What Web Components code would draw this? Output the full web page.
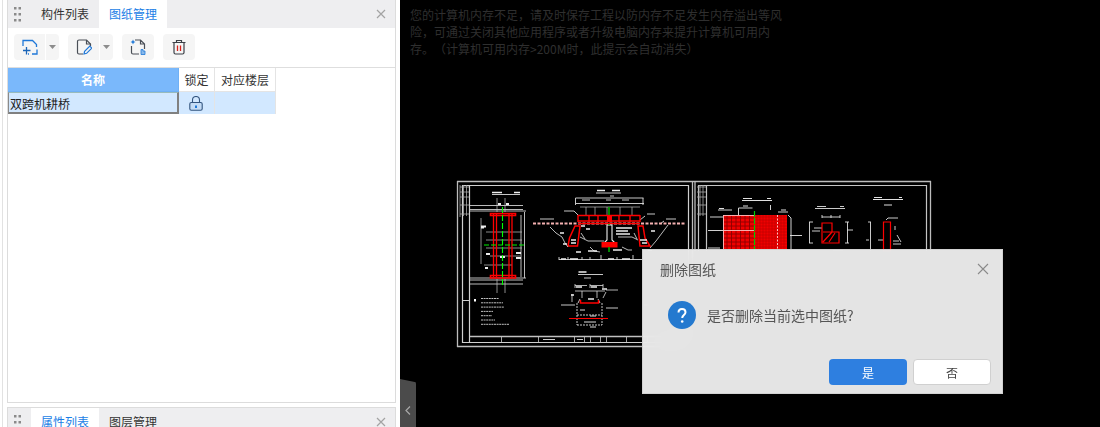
<!DOCTYPE html>
<html lang="zh">
<head>
<meta charset="utf-8">
<title>图纸管理</title>
<style>
    html, body { margin: 0; height: 100%; overflow: hidden; background: #000; }
    body { font: 12px "Noto Sans CJK SC", "Liberation Sans", sans-serif; }
</style>
</head>
<body>
<app-shell>
    <side-column slot="side">
        <dock-panel style="flex: 1" active="1" tabs="构件列表,图纸管理">
            <drawing-toolbar></drawing-toolbar>
            <drawing-table></drawing-table>
        </dock-panel>
        <dock-panel style="height: 20px; flex: none" active="0" tabs="属性列表,图层管理"></dock-panel>
    </side-column>
    <cad-canvas slot="main">
        <confirm-dialog heading="删除图纸" message="是否删除当前选中图纸?"></confirm-dialog>
    </cad-canvas>
</app-shell>

<script>
class AppShell extends HTMLElement {
    constructor() {
        super();
        this.attachShadow({ mode: 'open' });
        this.shadowRoot.innerHTML = `
            <style>
                :host { display: flex; width: 1100px; height: 427px; overflow: hidden; }
                ::slotted(*) { height: 100%; }
            </style>
            <slot name="side"></slot>
            <slot name="main"></slot>
        `;
    }
}

class SideColumn extends HTMLElement {
    constructor() {
        super();
        this.attachShadow({ mode: 'open' });
        this.shadowRoot.innerHTML = `
            <style>
                :host {
                    display: flex;
                    flex-direction: column;
                    gap: 4px;
                    box-sizing: border-box;
                    width: 400px;
                    flex: none;
                    background: #fff;
                    padding-left: 7px;
                    padding-right: 4px;
                    position: relative;
                }
                .edge { position: absolute; left: 2px; top: 0; bottom: 0; width: 1px; background: #e2e2e2; }
            </style>
            <div class="edge"></div>
            <slot></slot>
        `;
    }
}

class DockPanel extends HTMLElement {
    constructor() {
        super();
        this.attachShadow({ mode: 'open' });
        const tabs = this.getAttribute('tabs').split(',');
        const active = Number(this.getAttribute('active'));
        const tabHtml = tabs.map((t, i) => `<div class="tab ${i === active ? 'on' : ''}">${t}</div>`).join('');
        this.shadowRoot.innerHTML = `
            <style>
                :host {
                    display: flex;
                    flex-direction: column;
                    min-height: 0;
                    box-sizing: border-box;
                    border: 1px solid #dcdcdc;
                    background: #fff;
                    overflow: hidden;
                }
                :host([active="0"]) { border-bottom: 0; }
                :host([active="1"]) { border-top: 0; }
                .bar {
                    display: flex;
                    align-items: stretch;
                    height: 28px;
                    flex: none;
                    background: #eeeef0;
                }
                .grip { width: 23px; flex: none; padding: 7px 0 0 6px; box-sizing: border-box; }
                .grip svg { display: block; }
                .tab {
                    width: 68px;
                    display: flex;
                    align-items: center;
                    justify-content: center;
                    color: #333;
                    font-size: 12px;
                    padding-bottom: 1px;
                    box-sizing: border-box;
                }
                .tab.on { background: #fff; color: #1a7ee6; }
                .close { margin-left: auto; width: 29px; display: flex; justify-content: center; padding-top: 9px; box-sizing: border-box; }
            </style>
            <div class="bar">
                <div class="grip"><svg width="7" height="15" fill="#8a8a8a"><rect width="2.500" height="2.500"/><rect x="4.500" width="2.500" height="2.500"/><rect y="6" width="2.500" height="2.500"/><rect x="4.500" y="6" width="2.500" height="2.500"/><rect y="12" width="2.500" height="2.500"/><rect x="4.500" y="12" width="2.500" height="2.500"/></svg></div>
                ${tabHtml}
                <div class="close"><svg width="10" height="10" stroke="#a3a3a3" stroke-width="1.200"><path d="M1 1l8 8M9 1l-8 8"/></svg></div>
            </div>
            <slot></slot>
        `;
    }
}

class DrawingToolbar extends HTMLElement {
    constructor() {
        super();
        this.attachShadow({ mode: 'open' });
        const caret = `<span class="drop"><svg width="7" height="4" fill="#8c8c8c"><path d="M0 0h7L3.500 4z"/></svg></span>`;
        this.shadowRoot.innerHTML = `
            <style>
                :host {
                    display: flex;
                    flex: none;
                    gap: 9px;
                    height: 40px;
                    box-sizing: border-box;
                    padding: 6px 0 0 6px;
                    border-bottom: 1px solid #dedede;
                }
                .btn {
                    display: flex;
                    height: 26px;
                    width: 32px;
                    background: #f5f5f5;
                    border-radius: 4px;
                    align-items: center;
                    justify-content: center;
                }
                .btn.split { width: 45px; justify-content: flex-start; }
                .main { width: 32px; height: 26px; display: flex; align-items: center; justify-content: center; border-right: 1px solid #fff; box-sizing: border-box; }
                .drop { flex: 1; display: flex; align-items: center; justify-content: center; }
                svg { display: block; }
            </style>
            <div class="btn split"><span class="main">
                <svg width="16" height="16" fill="none" stroke="#1f78d8" stroke-width="1.300">
                    <path d="M1 7V1.500h9.500l4 4V8M15 10.500V15h-5M7 15H6"/>
                    <path d="M1 11.500h7.500M4.500 8v7.500" stroke="#1a65b8"/>
                </svg>
            </span>${caret}</div>
            <div class="btn split"><span class="main">
                <svg width="16" height="16" fill="none" stroke="#4a4f57" stroke-width="1.200">
                    <path d="M7 15H3a1.500 1.500 0 0 1-1.500-1.500v-11A1.500 1.500 0 0 1 3 1h7.500l4 4v2"/><path d="M10.500 1v4h4"/>
                    <path d="M8 15l.6-2.700 5.200-5.200 2 2-5.200 5.200z" stroke="#1f78d8"/>
                </svg>
            </span>${caret}</div>
            <div class="btn">
                <svg width="16" height="16" fill="none" stroke="#4a4f57" stroke-width="1.200">
                    <path d="M1.500 7v6.500A1.500 1.500 0 0 0 3 15h6M5 1h5.500l4 4v5M10.500 1v4h4"/>
                    <path d="M3 .5l.8 1.700 1.700.8-1.700.8L3 5.500l-.8-1.700L.5 3l1.700-.8z" fill="#1f78d8" stroke="none"/>
                    <path d="M11 10.500h2v1.500h2v3.500h-4z" fill="#8ab9ea" stroke="#1f78d8" stroke-width=".8"/>
                </svg>
            </div>
            <div class="btn">
                <svg width="14" height="16" fill="none" stroke="#3b3f46" stroke-width="1.200">
                    <path d="M.5 3.500h13M4.500 3.500V1.500h5v2M2 3.500v10A1.500 1.500 0 0 0 3.500 15h7a1.500 1.500 0 0 0 1.500-1.500v-10"/>
                    <path d="M5.500 6.500v5.500M8.500 6.500v5.500" stroke="#d6231c" stroke-width="1.300"/>
                </svg>
            </div>
        `;
    }
}

class DrawingTable extends HTMLElement {
    constructor() {
        super();
        this.attachShadow({ mode: 'open' });
        this.shadowRoot.innerHTML = `
            <style>
                :host {
                    display: grid;
                    grid-template-columns: 171px 36px 61px;
                    grid-template-rows: 24px 22px;
                    width: 268px;
                    font-size: 12px;
                    color: #333;
                }
                .h {
                    display: flex;
                    align-items: center;
                    justify-content: center;
                    border-right: 1px solid #e4e4e4;
                    border-bottom: 1px solid #e4e4e4;
                    box-sizing: border-box;
                }
                .h.name { background: #7ab8fb; color: #fff; font-weight: 700; border-color: #6fb0f5; }
                .c {
                    background: #d2e8ff;
                    border-right: 1px solid #e4e4e4;
                    box-sizing: border-box;
                    display: flex;
                    align-items: center;
                    justify-content: center;
                    padding-right: 2px;
                }
                .c.name {
                    justify-content: flex-start;
                    padding: 1px 0 0 1px;
                    border-top: 1px solid #9bb;
                    border-left: 1px solid #8a8a8a;
                    border-right: 2px solid #808080;
                    border-bottom: 2px solid #808080;
                    color: #222;
                }
            </style>
            <div class="h name">名称</div>
            <div class="h">锁定</div>
            <div class="h">对应楼层</div>
            <div class="c name">双跨机耕桥</div>
            <div class="c">
                <svg width="14" height="15" fill="none" stroke="#33557f" stroke-width="1.100">
                    <path d="M3.500 6.500V4a3.500 3.500 0 0 1 7 0v2.500"/>
                    <rect x=".8" y="6.500" width="12.400" height="7.800" rx="1.500" fill="#c4dcf6"/>
                    <path d="M7 9.500v2.500" stroke="#1f78d8" stroke-width="2"/>
                </svg>
            </div>
            <div class="c"></div>
        `;
    }
}

class CadCanvas extends HTMLElement {
    constructor() {
        super();
        this.attachShadow({ mode: 'open' });
        this.shadowRoot.innerHTML = `
            <style>
                :host { display: block; flex: 1; min-width: 0; position: relative; background: #000; height: 427px; overflow: hidden; }
                .notice {
                    position: absolute;
                    left: 10px;
                    top: 6px;
                    width: 380px;
                    font-size: 12px;
                    line-height: 17px;
                    color: #2f2f2f;
                    text-spacing-trim: space-all;
                }
                svg.sheet { position: absolute; left: 0; top: 0; }
                .handle {
                    position: absolute;
                    left: 0;
                    top: 379px;
                    width: 16px;
                    height: 48px;
                    background: #4b4b4b;
                    border-top-right-radius: 5px;
                    clip-path: polygon(0 0, 100% 7%, 100% 100%, 0 100%);
                    display: flex;
                    justify-content: center;
                    padding-top: 27px;
                    box-sizing: border-box;
                }
            </style>
            <div class="notice">您的计算机内存不足&#65292;请及时保存工程以防内存不足发生内存溢出等风险&#65292;可通过关闭其他应用程序或者升级电脑内存来提升计算机可用内存&#12290;&#65288;计算机可用内存&gt;200M时&#65292;此提示会自动消失&#65289;</div>
            <svg class="sheet" width="700" height="427" viewBox="400 0 700 427" fill="none" stroke="#d8d8d8" stroke-width="1">${this.sheet()}</svg>
            <div class="handle"><svg width="6" height="9" fill="none" stroke="#a8a8a8" stroke-width="1.200"><path d="M5 .5L1 4.500l4 4"/></svg></div>
            <slot></slot>
        `;
    }

    sheet() {
        // frames
        let frame = `
            <path d="M457.500 181v166M457 181.500h474M457 346.500h236M692.500 181v166M695 181v70M930.500 181v70" stroke="#bdbdbd" stroke-width="1.300"/>
            <path d="M462.500 185.500h226v157h-226zM469.500 185v157M462.500 300.500h7" stroke="#d0d0d0" stroke-width="1.200"/>
            <path d="M460 187h9M460 192h9M460 197h9M460 205h9M460 214h9M463.500 185v31M466.500 185v31M460 185v32" stroke="#aaa" stroke-width=".8"/>
            <path d="M470 336.500h219" stroke="#c0c0c0" stroke-width="1.500"/>
            <path d="M501.500 337v5M538.500 337v5M574.500 337v5M584.500 337v5M590.500 337v5M600.500 337v5M606.500 337v5M626.500 337v5M647.500 337v5M666.500 337v5" stroke="#ccc" stroke-width=".8"/>
            <path d="M543 339.500h12M577 339.500h6" stroke="#ccc"/>
            <path d="M698.500 185.500h228M698.500 185v66M926.500 185v66M706.500 185v66" stroke="#c4c4c4" stroke-width="1.200"/>
            <path d="M697 187h9M697 192h9M697 197h9M697 205h9M697 214h9M700 185v31M703 185v31" stroke="#aaa" stroke-width=".8"/>`;

        // plan view
        let plan = `
            <path d="M492 194.500h28" stroke="#ddd" stroke-width=".9"/>
            <path d="M492 192.500h10M514 192.500h6" stroke="#eee" stroke-width="1.500"/>
            <path d="M470 205.500h53M470 209.500h53M470 211h56M470 278h56M470 280h53M470 284h53M524.500 212v66M521 215v62" stroke="#cfcfcf" stroke-width=".9"/>
            <path d="M497 198v14M505 198v14M497 279v14M505 279v14M486 232h36M486 240h36M486 248h36M490 256h30M484 265h28M481 218v46" stroke="#c4c4c4" stroke-width=".7"/>
            <path d="M481 226.500h5M481 227.500h3M486 254h4M516 253h5M516 258h5M500 257h5M485 268h3M498 204h3M506 204h3" stroke="#eee" stroke-width="2"/>
            <path d="M493.500 214v64M496.500 214v64M509 214v64M512 214v64" stroke="#f00" stroke-width="1.300"/>
            <path d="M490.500 213.500h25v2h-25zM490.500 275.500h25v2.500h-25z" stroke="#f00" stroke-width="1.600"/>
            <path d="M502.500 207v80" stroke="#0f0" stroke-width="1.100" stroke-dasharray="6 2"/>
            <path d="M484 245h41" stroke="#0e0" stroke-width="1.100" stroke-dasharray="5 2"/>`;

        // elevation
        let elev = `
            <path d="M597 190.500h8M612 190.500h8" stroke="#eee" stroke-width="1.500"/>
            <path d="M596 193h25M575.500 198h68M575.500 198v7M643 198v7M576 203.500h68M582 200h8M606 200h5M622 200h7M610 196h4" stroke="#ddd" stroke-width=".9"/>
            <path d="M580 207h60M586 207v8M595 207v8M607 207v8M620 207v8M632 207v8" stroke="#bbb" stroke-width=".7"/>
            <path d="M564 211h10M574 211l5 5M647 214h8M645 216l-5 4M540 219h14M666 219h10M664 221l-4 3" stroke="#ddd" stroke-width=".9"/>
            <path d="M533 223.500h152" stroke="#f4b0b0" stroke-width="1.800" stroke-dasharray="3 1.500"/>
            <path d="M578 215.500h62M578 221h62M578 215v7M640 215v7M589 215v7M598 215v7M609 215v7M619 215v7M630 215v7M578 223.500h62" stroke="#f00" stroke-width="1.400"/>
            <rect x="607" y="215" width="5" height="7" fill="#f00" stroke="none"/>
            <path d="M575 226h5l-2.500 20H568l1.500-8zM638 226h5l2 12 5 8h-10z" stroke="#f00" stroke-width="1.500"/>
            <path d="M571 240h5M640 240h7M571 243h5M642 243h5" stroke="#eee" stroke-width="1.500"/>
            <path d="M607 225h5v15l3 3h-11l3-3z" stroke="#eee" stroke-width="1.100"/>
            <rect x="602" y="242.500" width="15" height="4.500" fill="#f00" stroke="#f00"/>
            <path d="M609 207v8M609 224v1M609 247v5" stroke="#0a0" stroke-width="1.600"/>
            <path d="M550 227l6 6 6 4 3 6 3 4M668 225l-6 8-6 8-6 7M580 237l8 4h16M618 237h14l6 3M590 247l4 4 6 1M622 247l6 3 4 0M581 233l4 6M634 233l3 6" stroke="#cfcfcf" stroke-width=".9"/>
            <path d="M581 226h4M586 229h4M616 228h16M616 231h12M616 234h14M560 233h4M651 231h4" stroke="#eee" stroke-width="1.300"/>
            <path d="M588 251h9M613 250h9M576 252h5M563 244h4M648 250h4" stroke="#eee" stroke-width="1.400"/>
            <path d="M559 259.500h84M559 257v3M568 257v3M582 257v3M590 257v3M601 255v5M617 257v3M633 255v5" stroke="#ddd" stroke-width=".9"/>
            <path d="M561 259h5M570 259h8M608 259h6M622 259h8" stroke="#eee" stroke-width="1.600"/>`;

        // small section
        let section = `
            <path d="M578.500 272h8" stroke="#eee" stroke-width="1.500"/>
            <path d="M578 274.500h25M584 278h7" stroke="#ddd" stroke-width=".9"/>
            <path d="M575 285.500h12M590 285.500h13M575 284v4M590 284v4M603 284v4M575 291h30M582 291v7M597 291v7M572 294v8M603 298l3-6M606 290h12" stroke="#ddd" stroke-width=".8"/>
            <path d="M576 287h6M591 287h6M571 295h3M602 289h5M588 299h6" stroke="#eee" stroke-width="1.300"/>
            <path d="M561 305h14M606 308h12M578 303l2-4M600 303l-2-4M644 305h5" stroke="#ddd" stroke-width=".9"/>
            <path d="M580.500 300v3h18v-3" stroke="#f00" stroke-width="1.500"/>
            <path d="M577 303v22M602 303v22M577 315h25M577 325h25" stroke="#ddd" stroke-width=".9" stroke-dasharray="2 1"/>
            <path d="M569 318.500h39" stroke="#f00" stroke-width="1.200"/>
            <path d="M580 310h5M590 316h6M584 322h12M590 327h6" stroke="#ddd"/>`;

        // notes
        let notes = '<path d="M475 299v2.500" stroke="#fff" stroke-width="2"/>';
        const noteLens = [18, 22, 23, 12, 11, 14, 28];
        noteLens.forEach((len, i) => {
            const y = 298.500 + i * 4.300;
            notes += `<path d="M481 ${y}h${len}" stroke="#c0c0c0" stroke-width="1" stroke-dasharray="2 .6"/>`;
        });

        // right sheet, hatched block and sections
        let grid = '<rect x="723" y="215" width="64" height="34" fill="#f00000" stroke="none"/>';
        for (let x = 727; x < 754; x += 4.500) grid += `<path d="M${x} 215v34" stroke="#8a0000" stroke-width=".9"/>`;
        for (let y = 218; y < 249; y += 4) grid += `<path d="M724 ${y}h30" stroke="#8a0000" stroke-width=".9"/>`;
        for (let x = 757; x < 787; x += 3) grid += `<path d="M${x} 215v34" stroke="#b80000" stroke-width=".6"/>`;
        for (let y = 217; y < 249; y += 3) grid += `<path d="M755 ${y}h32" stroke="#b80000" stroke-width=".6"/>`;
        let right = `
            ${grid}
            <path d="M723.500 215v34M723 215.500h32M723 230.500h31" stroke="#ffc0c0" stroke-width=".9"/>
            <path d="M777.500 215v34" stroke="#ffc0c0" stroke-width="1" stroke-dasharray="2 1.500"/>
            <path d="M754.500 211v40" stroke="#0c0" stroke-width="1.200" stroke-dasharray="6 1"/>
            <path d="M710 217h13M708 230.500h15M708 248h12M718 210h14M738.500 215v-7h14M778 212h10M788 215l3 3v31M790 235.500h12M770.500 205v5" stroke="#e8e8e8" stroke-width=".9"/>
            <path d="M742 200.500h30M743 198.500h9M767 198.500h4M719 208.500h5M743 206h5M781 210h5" stroke="#e0e0e0"/>
            <path d="M815 208.500h30M817 206.500h9M840 206.500h4M822 217h18M822 215v3M831 215v3M840 215v3M814 228h8M812 231h8M833 250h10" stroke="#e0e0e0" stroke-width=".9"/>
            <path d="M809.500 222v21M809 222h4M809 243h4M847.500 222v21M845 222h4M845 243h4M847 230h6" stroke="#e0e0e0" stroke-width=".9"/>
            <path d="M822 223h10v9h7v11h-17zM823 242l9-10M829 242l6-9M823 232h9" stroke="#f00" stroke-width="1.200"/>
            <path d="M873 199.500h30M874 197.500h8M899 197.500h3M884 205h8" stroke="#e0e0e0"/>
            <path d="M870.500 222v29M868 222h3M866 240h3M878 240h6M888 218h10M886 220l2-2M895 226v4M897 235l4 7M893 241h6M893 244h8" stroke="#e0e0e0" stroke-width=".9"/>
            <path d="M883.500 222h7v29h-7z" stroke="#f00" stroke-width="1.200"/>`;
        return frame + plan + elev + section + notes + right;
    }
}

class ConfirmDialog extends HTMLElement {
    constructor() {
        super();
        this.attachShadow({ mode: 'open' });
        this.shadowRoot.innerHTML = `
            <style>
                :host {
                    display: flex;
                    flex-direction: column;
                    position: absolute;
                    left: 242px;
                    top: 249px;
                    width: 361px;
                    height: 145px;
                    box-sizing: border-box;
                    background: rgba(240, 240, 240, .95);
                    backdrop-filter: blur(14px);
                    border: 1px solid #d2d2d2;
                    color: #555;
                }
                .head {
                    display: flex;
                    align-items: center;
                    justify-content: space-between;
                    height: 37px;
                    padding: 0 13px 0 17px;
                    font-size: 14px;
                }
                .body {
                    display: flex;
                    align-items: center;
                    gap: 11px;
                    height: 32px;
                    margin-top: 12px;
                    padding-left: 25px;
                    font-size: 14px;
                }
                .foot {
                    display: flex;
                    justify-content: flex-end;
                    gap: 6px;
                    margin-top: 28px;
                    padding-right: 11px;
                }
                button {
                    width: 78px;
                    height: 26px;
                    padding: 0;
                    border-radius: 4px;
                    font: 12px "Noto Sans CJK SC", "Liberation Sans", sans-serif;
                    cursor: pointer;
                }
                .yes { background: #2e7fe0; border: 0; color: #fff; }
                .no { background: #fff; border: 1px solid #d0d0d0; color: #444; }
                svg { display: block; flex: none; }
            </style>
            <div class="head">
                <span>${this.getAttribute('heading')}</span>
                <svg width="12" height="12" stroke="#8a8a8a" stroke-width="1.100"><path d="M1 1l10 10M11 1L1 11"/></svg>
            </div>
            <div class="body">
                <svg width="28" height="28"><circle cx="14" cy="14" r="14" fill="#2479cf"/><path d="M10.500 11.500c0-2.200 1.500-3.500 3.500-3.500s3.500 1.300 3.500 3.300c0 2.700-3.300 2.800-3.300 5.700" fill="none" stroke="#fff" stroke-width="2"/><circle cx="14.200" cy="20.500" r="1.300" fill="#fff"/></svg>
                <span>${this.getAttribute('message')}</span>
            </div>
            <div class="foot">
                <button class="yes">是</button>
                <button class="no">否</button>
            </div>
        `;
    }
}

customElements.define('app-shell', AppShell);
customElements.define('side-column', SideColumn);
customElements.define('dock-panel', DockPanel);
customElements.define('drawing-toolbar', DrawingToolbar);
customElements.define('drawing-table', DrawingTable);
customElements.define('cad-canvas', CadCanvas);
customElements.define('confirm-dialog', ConfirmDialog);
</script>
</body>
</html>
